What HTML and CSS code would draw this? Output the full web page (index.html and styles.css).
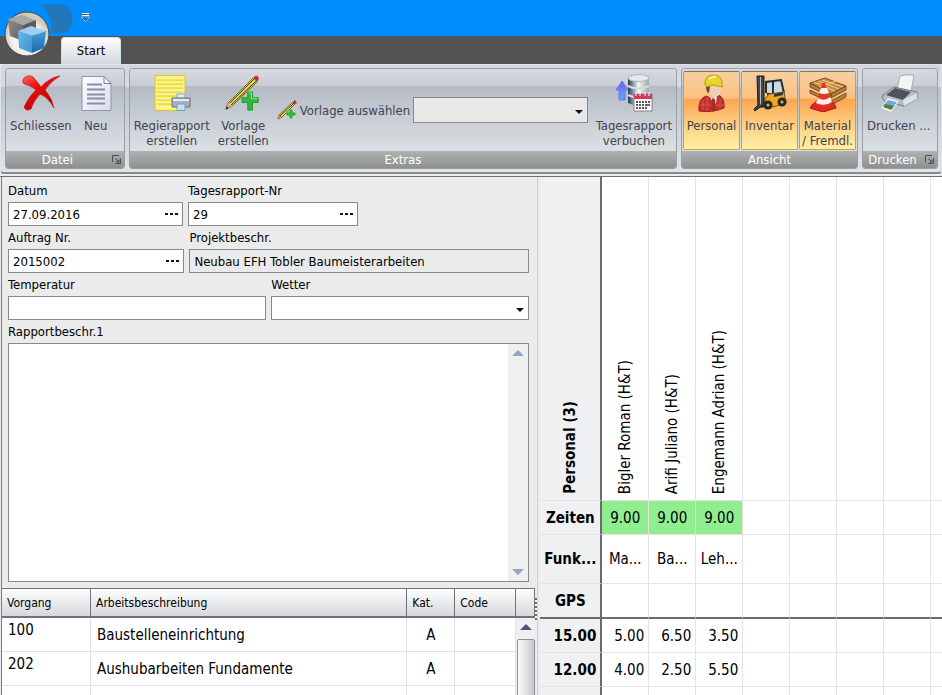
FILE: index.html
```html
<!DOCTYPE html>
<html lang="de">
<head>
  <meta charset="UTF-8">
  <meta name="viewport" content="width=device-width, initial-scale=1.0">
  <title>Tagesrapport</title>
  <link rel="stylesheet" href="styles.css">
</head>
<body>
  <header class="titlebar">
    <svg class="quick-bg" viewBox="0 0 32 30" width="32" height="30">
      <defs><linearGradient id="qb" x2="0" y2="1"><stop offset="0" stop-color="#1b78bd"/><stop offset="1" stop-color="#2675b1"/></linearGradient></defs>
      <path d="M0 0H19Q31 0 31 14.500Q31 29 19 29H11Q12 12 0 0Z" fill="url(#qb)" stroke="#1580d6"/>
    </svg>
    <button class="quick-more" aria-label="Schnellzugriff anpassen">
      <svg viewBox="0 0 9 9" width="9" height="9"><path d="M1 1.500H8" stroke="#fff" stroke-width="3"/><path d="M1 1.500H8" stroke="#4b6078"/><path d="M0 4H9L4.500 8.500Z" fill="#4b6078" stroke="#dceeff" stroke-width=".5"/></svg>
    </button>
    <button class="app-button" aria-label="Anwendungsmenü">
      <svg viewBox="0 0 46 46" width="46" height="46">
        <defs>
          <radialGradient id="orb" cy=".6"><stop offset="0" stop-color="#fff"/><stop offset=".7" stop-color="#f2f0e6"/><stop offset="1" stop-color="#cfcbbb"/></radialGradient>
          <linearGradient id="cubeL" x2="1" y2="1"><stop offset="0" stop-color="#6db8ee"/><stop offset="1" stop-color="#3a8fce"/></linearGradient>
          <linearGradient id="cubeR" x2="0" y2="1"><stop offset="0" stop-color="#4a9cd8"/><stop offset="1" stop-color="#1a69ad"/></linearGradient>
          <linearGradient id="grayL" x2="1" y2="1"><stop offset="0" stop-color="#8d8d8d"/><stop offset="1" stop-color="#626262"/></linearGradient>
        </defs>
        <circle cx="23" cy="23" r="22" fill="url(#orb)" stroke="#45484b"/>
        <path d="M4 8L18 4L32 9L19 14Z" fill="#a6a6a6"/>
        <path d="M4 8L19 14V30L6 25Z" fill="url(#grayL)"/>
        <path d="M19 14L32 9V24L19 30Z" fill="#5c5c5c"/>
        <path d="M14 20L27 15L42 20L28 25Z" fill="#9ccff3"/>
        <path d="M14 20L28 25V42L15 37Z" fill="url(#cubeL)"/>
        <path d="M28 25L42 20L40 37L28 42Z" fill="url(#cubeR)"/>
      </svg>
    </button>
  </header>

  <nav class="tabs">
    <a class="tab" href="#start">Start</a>
  </nav>

  <section class="ribbon" id="start">
    <div class="group">
      <div class="group-body tight">
        <button class="tool">
          <svg viewBox="0 0 40 38" width="40" height="38">
            <defs><linearGradient id="red" x2=".6" y2="1"><stop offset="0" stop-color="#ff6a6a"/><stop offset=".35" stop-color="#ee1111"/><stop offset="1" stop-color="#b50000"/></linearGradient></defs>
            <path d="M3 4Q7 0 12 3Q16 7 20 13Q29 3 39 2Q30 7 24 16Q31 24 33 34Q27 23 19 20Q12 28 10 35Q5 38 3 33Q8 22 15 16Q9 11 3 10Q0 7 3 4Z" fill="url(#red)" stroke="#c01818" stroke-width=".6"/>
          </svg>
          <span>Schliessen</span>
        </button>
        <button class="tool">
          <svg viewBox="0 0 32 38" width="32" height="38">
            <defs><linearGradient id="page" x2="1" y2="1"><stop offset="0" stop-color="#fff"/><stop offset="1" stop-color="#dadcf2"/></linearGradient></defs>
            <path d="M2 2.500H24L31 9.500V36.500H2Z" fill="url(#page)" stroke="#9097a5"/>
            <path d="M24 2.500V9.500H31Z" fill="#f4f5fb" stroke="#7b8495"/>
            <path d="M7 10.500H22M7 15.500H25M7 20.500H25M7 24.500H25M7 29.500H25" stroke="#8590a4" stroke-width="2"/>
          </svg>
          <span>Neu</span>
        </button>
      </div>
      <div class="group-title"><span>Datei</span><button class="launcher" aria-label="Datei Optionen"><svg viewBox="0 0 9 9" width="9" height="9"><path d="M.5 7V.5H7M3.500 8.500H8.500V3.500M3.500 3.500L7 7M7 4.500V7H4.500" fill="none" stroke="#4b4d50"/></svg></button></div>
    </div>

    <div class="group group-wide">
      <div class="group-body">
        <button class="tool">
          <svg viewBox="0 0 38 38" width="38" height="38">
            <path d="M2 1.500H32V36.500H2Z" fill="#fff36b" stroke="#d9c443"/>
            <path d="M4 5H30M4 9H30M4 13H30M4 17H30M4 21H30M4 25H30M4 29H30M4 33H30" stroke="#fffcc4"/>
            <path d="M4 6H30M4 10H30M4 14H30M4 18H30M4 22H30M4 26H30M4 30H30" stroke="#d3c445"/>
            <path d="M24 20H32V26H24Z" fill="#d6efff" stroke="#87a8c0"/>
            <path d="M19 24H37V33H19Z" fill="#a9b0ba" stroke="#69717c"/>
            <path d="M20 26H36" stroke="#e9edf1" stroke-width="2"/>
            <path d="M24 30H32V36.500H24Z" fill="#bfe4fd" stroke="#7c9eb9"/>
          </svg>
          <span>Regierapport<br>erstellen</span>
        </button>
        <button class="tool">
          <svg viewBox="0 0 38 40" width="38" height="40">
            <path d="M24 19H29V25H35V30H29V38H24V30H18V25H24Z" fill="#2fb83a" stroke="#1b9a26"/>
            <path d="M25 20H28V26H34" fill="none" stroke="#8ff082"/>
            <path d="M1 37L3 31L30 4L34 8L7 34Z" fill="#f8e84e" stroke="#4e4821"/>
            <path d="M5 31L31 5M6 33L33 7" stroke="#25230f"/>
            <path d="M1 37L3 31L7 34Z" fill="#e4ab71"/><path d="M1 37L2 34L4 36Z" fill="#222"/>
            <path d="M30 4Q32 1 34 2Q37 4 34 8Z" fill="#c92536"/>
          </svg>
          <span>Vorlage<br>erstellen</span>
        </button>
        <div class="picker">
          <svg viewBox="0 0 20 20" width="20" height="20">
            <path d="M13 10H15V13H18V15H15V18H13V15H10V13H13Z" fill="#2fc43a" stroke="#20a52b"/>
            <path d="M1 19L2 15L16 2L18 4L5 17Z" fill="#f3e25a" stroke="#4b4523" stroke-width=".8"/>
            <path d="M3 16L17 3" stroke="#302d14"/><path d="M1 19L2 15L5 17Z" fill="#c98f58"/>
            <path d="M16 2L18 0L20 3L18 4Z" fill="#c92536"/>
          </svg>
          <label for="template">Vorlage auswählen</label>
          <div class="drop"><select id="template" class="box box-grey"><option></option></select></div>
        </div>
        <button class="tool">
          <svg viewBox="0 0 38 38" width="38" height="38">
            <defs>
              <linearGradient id="db"><stop offset="0" stop-color="#233a50"/><stop offset=".5" stop-color="#f4f6f7"/><stop offset="1" stop-color="#9ca5ac"/></linearGradient>
              <linearGradient id="up" x2="0" y2="1"><stop offset="0" stop-color="#6b62f2"/><stop offset="1" stop-color="#58a8ff"/></linearGradient>
            </defs>
            <path d="M13 4V29Q23 34 34 29V4Z" fill="url(#db)"/>
            <ellipse cx="23.500" cy="4" rx="10.500" ry="3.500" fill="#e4e8ea" stroke="#aab3ba"/>
            <path d="M13 12Q23 17 34 12M13 21Q23 26 34 21" fill="none" stroke="#d5dade" stroke-width="2"/>
            <path d="M7 7L13 16H10V26H4V16H1Z" fill="url(#up)" stroke="#7773df"/>
            <path d="M19 20H37V37H19Z" fill="#fff" stroke="#8f7f88"/>
            <path d="M19 20H37V25H19Z" fill="#d6385a"/>
            <path d="M21 18V22M25 18V22M30 18V22M34 18V22" stroke="#fff"/>
            <path d="M21 28H35M21 31H35M21 34H32" stroke="#555b66" stroke-width="2" stroke-dasharray="2 1"/>
            <path d="M32 31H35" stroke="#d6385a" stroke-width="2"/>
          </svg>
          <span>Tagesrapport<br>verbuchen</span>
        </button>
      </div>
      <div class="group-title"><span>Extras</span></div>
    </div>

    <div class="group">
      <div class="group-body toggles">
        <button class="tool toggle" aria-pressed="true">
          <svg viewBox="0 0 32 38" width="32" height="38">
            <path d="M3 37Q2 25 10 22L17 25L23 21Q29 25 28 34Q16 39 3 37Z" fill="#c4312e" stroke="#9b211f"/>
            <path d="M7 27V36M11 23V37M24 25V35M4 31H15M18 31H28" stroke="#d4544c"/>
            <path d="M13 22L17 25L21 21L20 30L17 28Z" fill="#f4eee8"/><path d="M16 25L19 25L20 36L17 38L15 35Z" fill="#a82c2b"/>
            <path d="M11 10H25Q27 22 19 23Q11 22 11 10Z" fill="#efd0b4"/>
            <path d="M10 11Q10 19 13 19L14 12Z" fill="#70451f"/>
            <path d="M9 11Q8 2 17 1Q27 1 26 11L27 13L16 11Q11 14 9 11Z" fill="#ead22f" stroke="#b89c16"/>
            <path d="M13 5Q16 2 20 3" fill="none" stroke="#fff79c" stroke-width="2"/>
          </svg>
          <span>Personal</span>
        </button>
        <button class="tool toggle" aria-pressed="true">
          <svg viewBox="0 0 34 38" width="34" height="38">
            <path d="M13 19V8L28 6L31 19" fill="#c9dae0" stroke="#252a2d" stroke-width="2"/>
            <path d="M20 8V23M14 20H28" stroke="#282c2f" stroke-width="2"/>
            <path d="M12 25L16 20L31 18L33 29L20 33L12 31Z" fill="#f1a719" stroke="#725316"/>
            <path d="M21 20L30 18V21L21 23Z" fill="#30373b"/>
            <path d="M4 2H11V33H5Z" fill="#41464a" stroke="#191c1e"/><path d="M7.500 3V32" stroke="#b7bcc0"/>
            <path d="M10 31L2 37L1 35L6 30" fill="#3b4146" stroke="#202326"/>
            <circle cx="15" cy="31" r="4.500" fill="#24282b"/><circle cx="15" cy="31" r="1.500" fill="#ddb85b"/>
            <circle cx="29" cy="28" r="4.500" fill="#24282b"/><circle cx="29" cy="28" r="1.500" fill="#ddb85b"/>
          </svg>
          <span>Inventar</span>
        </button>
        <button class="tool toggle" aria-pressed="true">
          <svg viewBox="0 0 38 38" width="38" height="38">
            <path d="M1 9L16 4L37 12L22 20Z" fill="#c58a45" stroke="#805021"/>
            <path d="M5 8L26 17M9 7L30 15M13 6L34 13M8 14L27 7" stroke="#efcc84"/>
            <path d="M1 9L22 20V23L1 13ZM22 20L37 12V16L22 24ZM1 16L22 26V29L1 19ZM22 27L37 19V23L22 31Z" fill="#b77b3c" stroke="#79501f"/>
            <path d="M3 31L9 26L25 29L27 34L14 38L1 34Z" fill="#df2921" stroke="#a71914"/>
            <path d="M13 9H16L23 30Q14 36 7 30Z" fill="#e93325"/>
            <path d="M12 14H18L20 19Q15 21 10 19ZM9 24Q15 28 21 23L23 28Q15 33 7 29Z" fill="#fff4ed"/>
          </svg>
          <span>Material<br>/ Fremdl.</span>
        </button>
      </div>
      <div class="group-title"><span>Ansicht</span></div>
    </div>

    <div class="group">
      <div class="group-body">
        <button class="tool">
          <svg viewBox="0 0 38 38" width="38" height="38">
            <path d="M17 15L20 2Q27 0 34 1L31 18Z" fill="#f4f5f6" stroke="#a7adb2"/>
            <path d="M2 22L14 13L37 18L37 25L24 32L4 27Z" fill="#b9bec4" stroke="#747b82"/>
            <path d="M6 21L15 14L31 18L23 26Z" fill="#4d545b"/>
            <path d="M23 26L37 19V25L24 32Z" fill="#dce1e4"/>
            <path d="M8 24L19 27L11 38L1 34Z" fill="#fff" stroke="#ccd2d8"/>
            <path d="M8 26L17 28L12 35L3 32Z" fill="#68a8ea"/><path d="M5 30L14 32L11 36L3 33Z" fill="#607b37"/>
          </svg>
          <span>Drucken ...</span>
        </button>
      </div>
      <div class="group-title"><span>Drucken</span><button class="launcher" aria-label="Drucken Optionen"><svg viewBox="0 0 9 9" width="9" height="9"><path d="M.5 7V.5H7M3.500 8.500H8.500V3.500M3.500 3.500L7 7M7 4.500V7H4.500" fill="none" stroke="#4b4d50"/></svg></button></div>
    </div>
  </section>

  <main class="content">
    <section class="left">
      <form class="form">
        <div class="row row-three">
          <div class="field">
            <label for="date">Datum</label>
            <div class="box lookup"><input type="text" id="date" value="27.09.2016"><button type="button" class="dots" aria-label="Datum wählen"></button></div>
          </div>
          <div class="field">
            <label for="number">Tagesrapport-Nr</label>
            <div class="box lookup"><input type="text" id="number" value="29"><button type="button" class="dots" aria-label="Rapport wählen"></button></div>
          </div>
        </div>
        <div class="row row-order">
          <div class="field">
            <label for="order">Auftrag Nr.</label>
            <div class="box lookup"><input type="text" id="order" value="2015002"><button type="button" class="dots" aria-label="Auftrag wählen"></button></div>
          </div>
          <div class="field">
            <label for="project">Projektbeschr.</label>
            <input type="text" class="box box-grey" id="project" value="Neubau EFH Tobler Baumeisterarbeiten" readonly>
          </div>
        </div>
        <div class="row row-half">
          <div class="field">
            <label for="temp">Temperatur</label>
            <input type="text" class="box" id="temp">
          </div>
          <div class="field">
            <label for="weather">Wetter</label>
            <div class="drop"><select class="box" id="weather"><option></option></select></div>
          </div>
        </div>
        <div class="field">
          <label for="report">Rapportbeschr.1</label>
          <div class="memo">
            <textarea id="report"></textarea>
            <div class="scroll"><i class="arrow arrow-up"></i><i class="arrow arrow-down"></i></div>
          </div>
        </div>
      </form>

      <div class="tasks-wrap">
        <table class="tasks">
          <thead>
            <tr><th class="col-no">Vorgang</th><th>Arbeitsbeschreibung</th><th class="col-cat">Kat.</th><th class="col-code">Code</th></tr>
          </thead>
          <tbody>
            <tr><td class="no">100</td><td>Baustelleneinrichtung</td><td class="cat">A</td><td></td></tr>
            <tr><td class="no">202</td><td>Aushubarbeiten Fundamente</td><td class="cat">A</td><td></td></tr>
            <tr><td></td><td></td><td></td><td></td></tr>
          </tbody>
        </table>
        <div class="tasks-side">
          <div class="side-head"></div>
          <div class="scroll scroll-on"><i class="arrow arrow-up"></i><div class="thumb"></div></div>
        </div>
      </div>
      <div class="grip"></div>
    </section>

    <section class="right">
      <table class="hours">
        <thead>
          <tr class="names">
            <th><span>Personal (3)</span></th>
            <td><span>Bigler Roman (H&amp;T)</span></td>
            <td><span>Arifi Juliano (H&amp;T)</span></td>
            <td><span>Engemann Adrian (H&amp;T)</span></td>
            <td></td><td></td><td></td><td></td><td></td>
          </tr>
          <tr><th>Zeiten</th><td class="ok">9.00</td><td class="ok">9.00</td><td class="ok">9.00</td><td></td><td></td><td></td><td></td><td></td></tr>
          <tr class="roles"><th>Funk...</th><td>Ma...</td><td>Ba...</td><td>Leh...</td><td></td><td></td><td></td><td></td><td></td></tr>
          <tr class="gps"><th>GPS</th><td></td><td></td><td></td><td></td><td></td><td></td><td></td><td></td></tr>
        </thead>
        <tbody>
          <tr><th>15.00</th><td>5.00</td><td>6.50</td><td>3.50</td><td></td><td></td><td></td><td></td><td></td></tr>
          <tr><th>12.00</th><td>4.00</td><td>2.50</td><td>5.50</td><td></td><td></td><td></td><td></td><td></td></tr>
          <tr><th></th><td></td><td></td><td></td><td></td><td></td><td></td><td></td><td></td></tr>
        </tbody>
      </table>
    </section>
  </main>
</body>
</html>
```

FILE: styles.css
```css
* {
  box-sizing: border-box;
}

body {
  margin: 0;
  height: 100vh;
  display: flex;
  flex-direction: column;
  overflow: hidden;
  background: #ebebeb;
  color: #000;
  font-family: "DejaVu Sans Condensed", "DejaVu Sans", sans-serif;
  font-size: 13px;
}

button, input, select, textarea {
  font: inherit;
  color: inherit;
}

button {
  padding: 0;
  border: 0;
  background: none;
}

svg {
  display: block;
  flex: none;
}

/* title bar and tabs */
.titlebar {
  position: relative;
  flex: none;
  height: 36px;
  display: flex;
  align-items: flex-start;
  gap: 8px;
  padding: 4px 0 0 41px;
  background: #008cff;
}

.quick-more {
  margin-top: 9px;
}

.app-button {
  position: absolute;
  left: 4px;
  top: 11px;
  z-index: 2;
}

.tabs {
  flex: none;
  height: 28px;
  padding: 1px 0 0 61px;
  background: #535353;
}

.tab {
  display: block;
  width: 60px;
  height: 27px;
  line-height: 26px;
  border-radius: 4px 4px 0 0;
  border: 1px solid #c9e3ea;
  border-bottom: 0;
  background: linear-gradient(#fbfbfc, #e4e7eb 60%, #d3d7de);
  color: #000;
  text-align: center;
  text-decoration: none;
}

/* ribbon */
.ribbon {
  flex: none;
  display: flex;
  gap: 4px;
  height: 110px;
  padding: 3px 3px 3px 4px;
  border: 1px solid #dfe3e8;
  border-bottom: 2px solid #8b8b8b;
  border-radius: 4px;
  background: linear-gradient(#d3d7de, #d9dce1 20%, #bcc2cb 21%, #dfe5e8);
  color: #43434f;
}

.group {
  flex: none;
  min-width: 76px;
  display: flex;
  flex-direction: column;
  border: 1px solid #9b9fa3;
  border-radius: 3px;
  overflow: hidden;
}

.group-wide {
  flex: 1;
}

.group-body {
  flex: 1;
  min-height: 0;
  display: flex;
  justify-content: space-between;
  gap: 8px;
  padding: 5px 4px 0;
  background: linear-gradient(#d6d9df, #c9cdd6 20%, #b5bbc5 21%, #dae0e3);
}

.group-body.tight {
  gap: 0;
}

.group-title {
  flex: none;
  height: 17px;
  display: flex;
  align-items: center;
  background: linear-gradient(#b0b2b2, #8e908f);
  color: #fff;
}

.group-title span {
  flex: 1;
  text-align: center;
}

.launcher {
  margin: 0 3px;
}

.tool {
  min-width: 48px;
  display: flex;
  flex-direction: column;
  align-items: center;
  text-align: center;
  line-height: 15px;
}

.tool svg {
  height: 38px;
  margin-bottom: 6px;
}

.group-body.toggles {
  gap: 1px;
  padding: 2px 1px 1px;
}

.toggle {
  min-width: 57px;
  padding-top: 2px;
  border: 1px solid #d49a3c;
  border-top-color: #8e7350;
  border-radius: 2px;
  background: linear-gradient(#f6cfa0, #fbc183 34%, #fda550 35%, #fdd183 70%, #fff0a5);
}

.picker {
  flex: 1;
  align-self: flex-start;
  display: flex;
  align-items: center;
  gap: 3px;
  padding-top: 23px;
  white-space: nowrap;
}

/* form controls */
.box {
  display: block;
  width: 100%;
  height: 24px;
  padding: 0 4px;
  border: 1px solid #898989;
  border-radius: 0;
  background: #fff;
}

.box-grey {
  background: #e9eaec;
}

.drop {
  position: relative;
  flex: 1;
}

.drop select {
  appearance: none;
}

.drop::after {
  content: "";
  position: absolute;
  right: 5px;
  top: 50%;
  border: 4px solid transparent;
  border-top-color: #111;
  border-bottom: 0;
  pointer-events: none;
}

.picker .box {
  height: 26px;
  background: #e8e8e8;
}

.lookup {
  display: flex;
  align-items: center;
}

.lookup input {
  flex: 1;
  min-width: 0;
  padding: 0;
  border: 0;
  outline: 0;
  background: none;
}

.dots {
  width: 13px;
  height: 2px;
  background: repeating-linear-gradient(90deg, #111 0 3px, transparent 3px 5px);
}

/* content */
.content {
  flex: 1;
  min-height: 0;
  margin-top: 2px;
  display: grid;
  grid-template-columns: 4fr 3fr;
  border-top: 1px solid #6f6f6f;
  overflow: hidden;
}

.left {
  position: relative;
  margin-left: 1px;
  padding-right: 2px;
  border-left: 1px solid #7b7b7b;
  border-right: 1px solid #cfd3da;
}

.form {
  padding: 2px 6px 6px;
}

.row {
  display: grid;
  gap: 5px;
}

.row-three {
  grid-template-columns: 177fr 168fr 168fr;
}

.row-order {
  grid-template-columns: 177fr 341fr;
}

.row-half {
  grid-template-columns: 1fr 1fr;
}

.field label {
  display: block;
  height: 23px;
  line-height: 23px;
}

.memo {
  display: flex;
  height: 239px;
  border: 1px solid #898989;
  background: #fff;
}

.memo textarea {
  flex: 1;
  padding: 4px;
  border: 0;
  outline: 0;
  resize: none;
}

.scroll {
  width: 20px;
  display: flex;
  flex-direction: column;
  align-items: center;
  justify-content: space-between;
  padding: 6px 0;
  background: #efeff0;
}

.arrow {
  border: 6px solid transparent;
}

.arrow-up {
  border-top: 0;
  border-bottom-color: #94a3cb;
}

.arrow-down {
  border-bottom: 0;
  border-top-color: #94a3cb;
}

/* task list */
.tasks-wrap {
  display: flex;
}

.tasks {
  flex: 1;
  border-collapse: separate;
  border-spacing: 0;
  table-layout: fixed;
  background: #fff;
  font-size: 15px;
}

.tasks th {
  height: 30px;
  padding: 0 5px;
  border: solid #6f7277;
  border-width: 1px 1px 2px 0;
  background: linear-gradient(#fff, #eaebed 50%, #d5d7db);
  font-size: 12px;
  font-weight: normal;
  text-align: left;
}

.tasks td {
  height: 34px;
  padding: 0 6px;
  border: solid #e2e2e2;
  border-width: 0 1px 1px 0;
}

.tasks .no {
  padding-bottom: 10px;
}

.tasks .cat {
  text-align: center;
}

.col-no {
  width: 89px;
}

.col-cat {
  width: 48px;
}

.col-code {
  width: 61px;
}

.tasks-side {
  width: 19px;
  display: flex;
  flex-direction: column;
}

.side-head {
  height: 30px;
  border: solid #6f7277;
  border-width: 1px 1px 2px 0;
  background: linear-gradient(#fff, #eaebed 50%, #d5d7db);
}

.scroll-on {
  flex: 1;
  width: 100%;
  padding-bottom: 0;
}

.scroll-on .arrow-up {
  border-bottom-color: #46567f;
}

.thumb {
  flex: 1;
  width: 18px;
  margin-top: 9px;
  border: 1px solid #8d9094;
  border-radius: 2px 2px 0 0;
  background: linear-gradient(90deg, #fafafa, #dcdde0 60%, #c4c7cb);
}

.grip {
  position: absolute;
  right: 0;
  top: 421px;
  width: 2px;
  height: 22px;
  background: repeating-linear-gradient(#6b6b6b 0 2px, #fff 2px 4px);
}

/* hours grid */
.right {
  margin-left: 2px;
  background: #fff;
  overflow: hidden;
}

.hours {
  width: 100%;
  border-collapse: separate;
  border-spacing: 0;
  table-layout: fixed;
  font-size: 15px;
}

.hours th, .hours td {
  height: 34px;
  padding: 0 4px;
  border: solid #e4e4e4;
  border-width: 0 1px 1px 0;
  text-align: right;
  white-space: nowrap;
}

.hours td {
  width: 47px;
}

.hours td:last-child {
  width: auto;
  border-right: 0;
}

.hours th {
  width: 62px;
  border-right: 2px solid #6b6b6d;
  background: #eff0f2;
}

.hours thead th, .hours thead td {
  padding: 0;
  text-align: center;
}

.hours .names > * {
  height: 324px;
  padding-bottom: 6px;
  vertical-align: bottom;
}

.names span {
  display: inline-block;
  vertical-align: bottom;
  writing-mode: vertical-rl;
  transform: rotate(180deg);
}

.hours .roles > * {
  height: 49px;
}

.hours .ok {
  background: #90ee90;
}

.hours .gps > * {
  height: 35px;
  border-bottom: 2px solid #6b6b6d;
}
```
